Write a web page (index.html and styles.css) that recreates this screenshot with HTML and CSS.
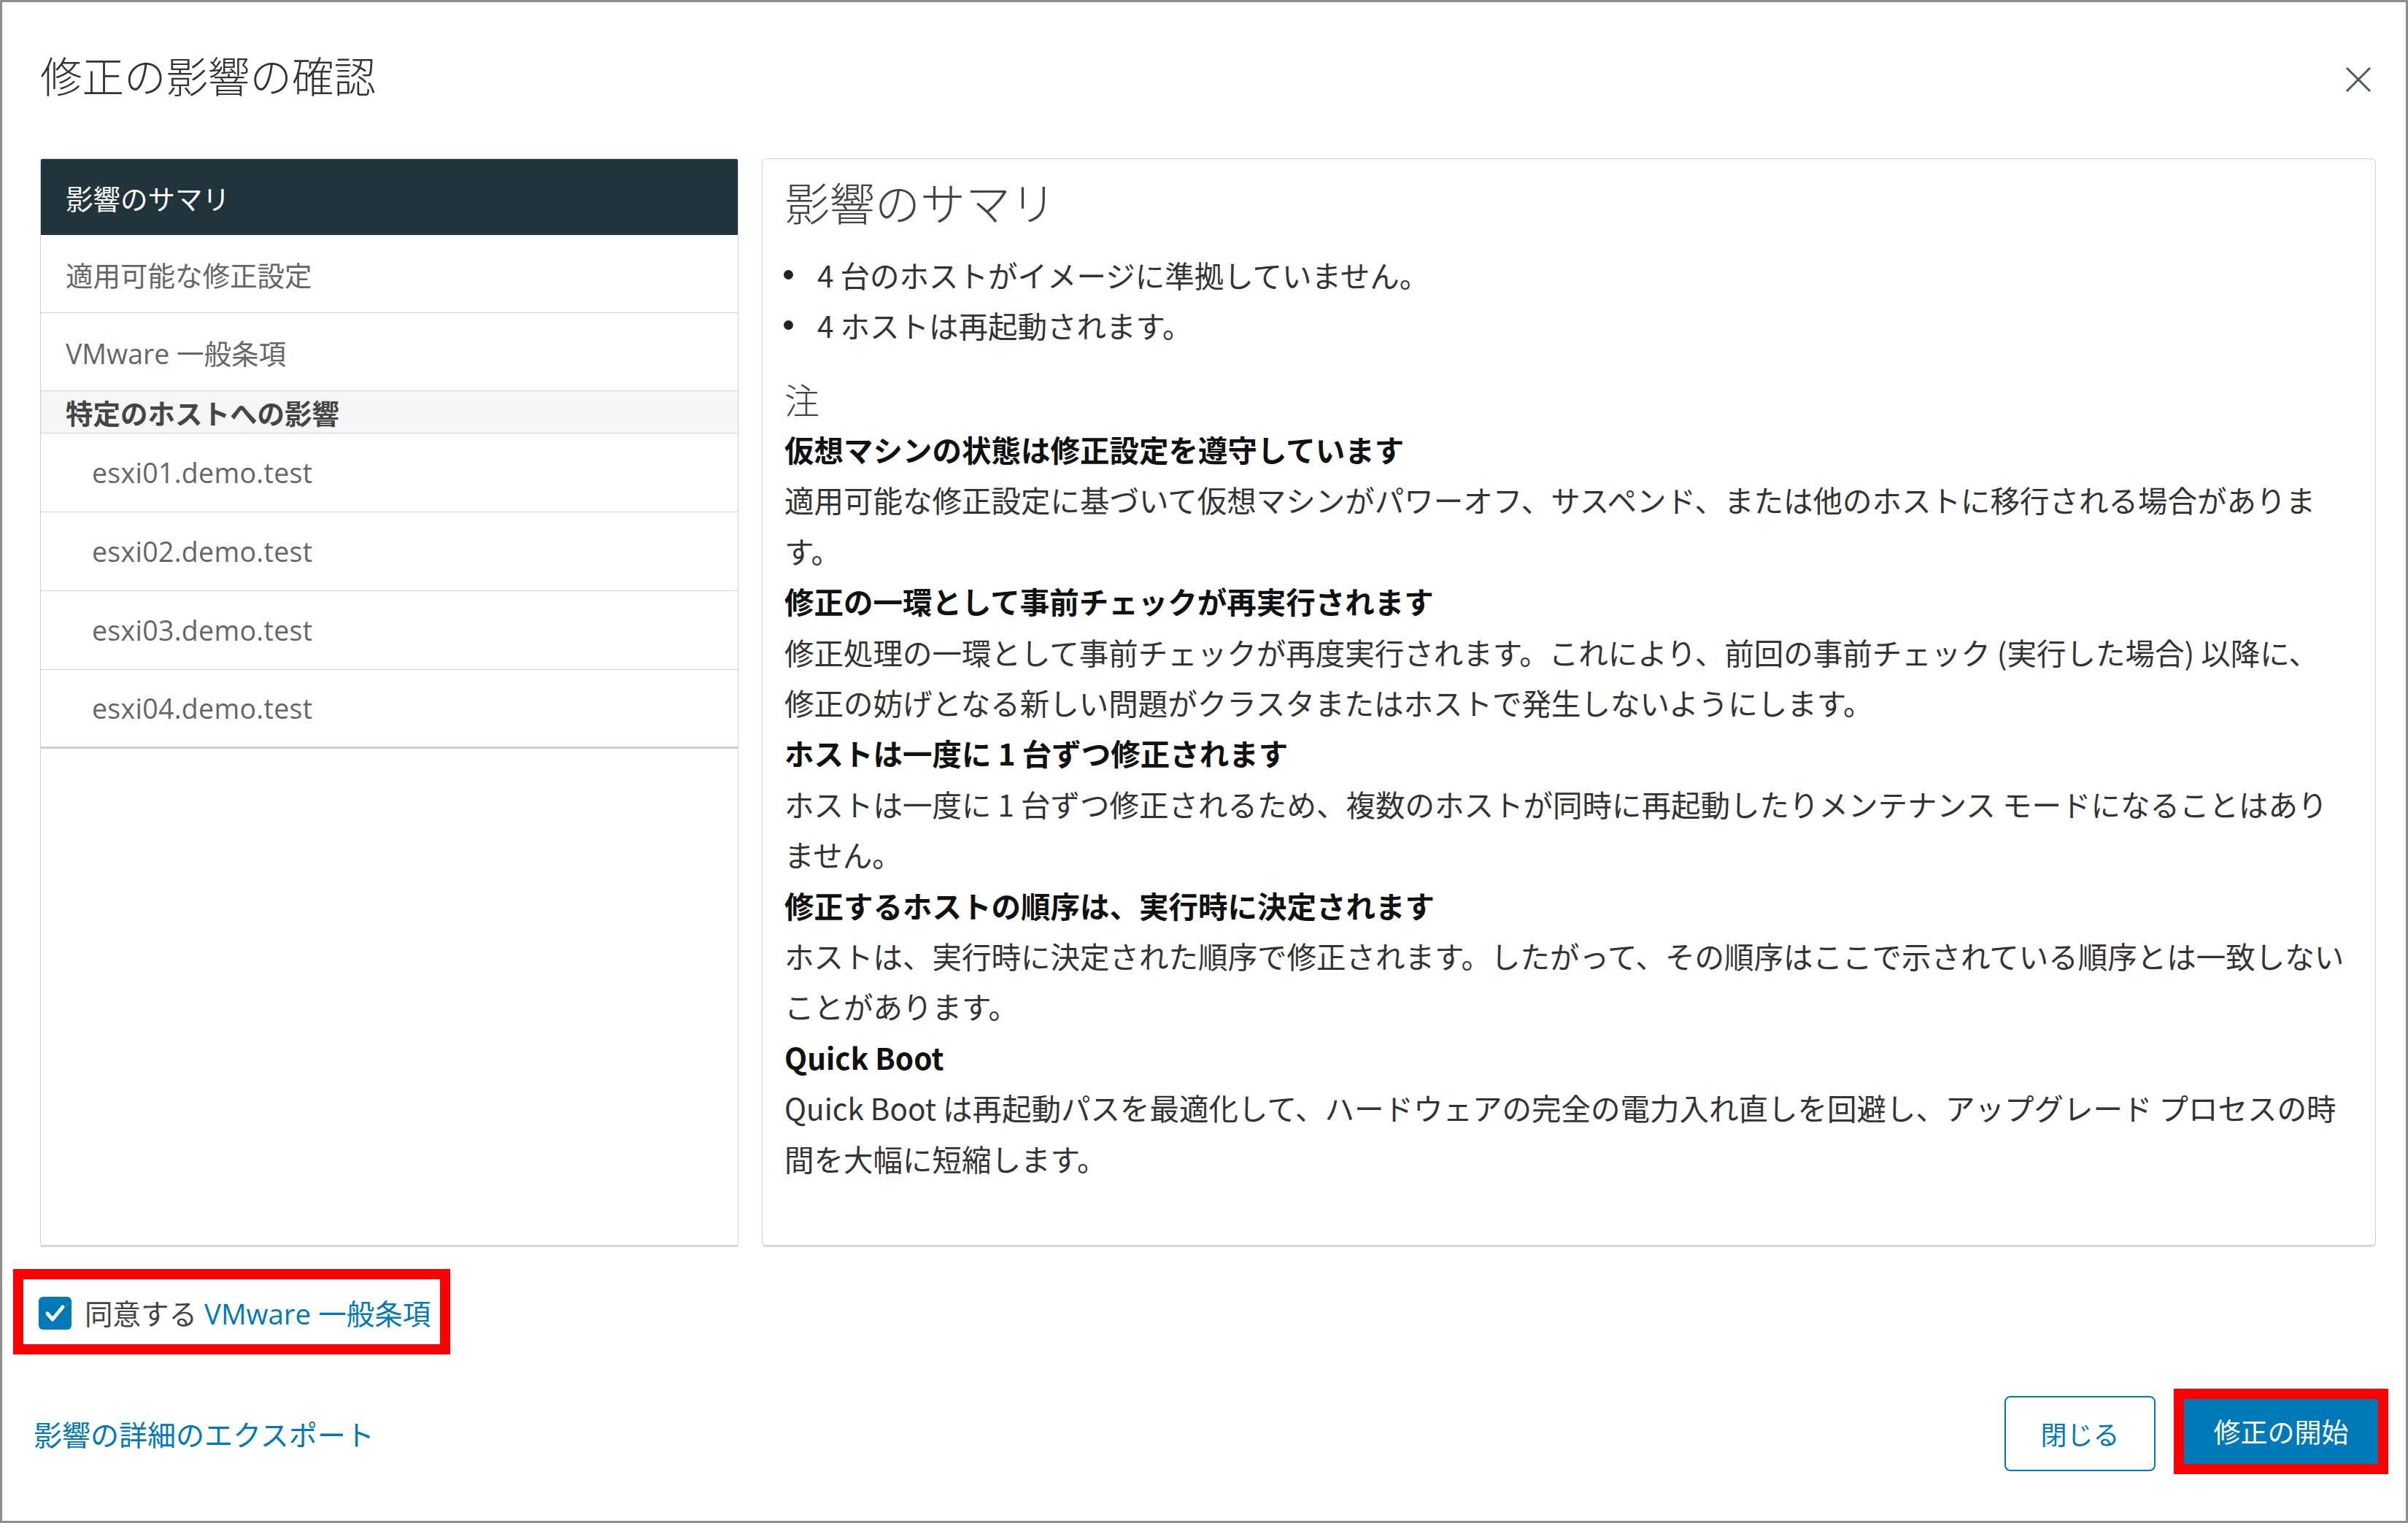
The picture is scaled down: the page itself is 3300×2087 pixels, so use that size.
FILE: index.html
```html
<!DOCTYPE html>
<html lang="ja">
<head>
  <meta charset="UTF-8" />
  <title>修正の影響の確認</title>
  <link rel="stylesheet" href="styles.css">
</head>
<body>

  <div class="modal">

    <div class="modal-header">
      <h1 class="title">修正の影響の確認</h1>
      <button class="close" aria-label="閉じる">
        <svg width="36" height="36" viewBox="0 0 36 36">
          <path d="M2 2 L34 34 M34 2 L2 34" stroke="#4d5961" stroke-width="3" fill="none" />
        </svg>
      </button>
    </div>

    <div class="modal-body">
      <div class="nav">
        <div class="nav-head">影響のサマリ</div>
        <div class="nav-item">適用可能な修正設定</div>
        <div class="nav-item">VMware 一般条項</div>
        <div class="nav-group">特定のホストへの影響</div>
        <div class="hosts">
          <div class="nav-item host">esxi01.demo.test</div>
          <div class="nav-item host">esxi02.demo.test</div>
          <div class="nav-item host">esxi03.demo.test</div>
          <div class="nav-item host">esxi04.demo.test</div>
        </div>
      </div>

      <div class="content">
        <h2>影響のサマリ</h2>
        <ul class="summary">
          <li>4 台のホストがイメージに準拠していません。</li>
          <li>4 ホストは再起動されます。</li>
        </ul>

        <h3>注</h3>

        <h4>仮想マシンの状態は修正設定を遵守しています</h4>
        <p>適用可能な修正設定に基づいて仮想マシンがパワーオフ、サスペンド、または他のホストに移行される場合がありま<br>す。</p>

        <h4>修正の一環として事前チェックが再実行されます</h4>
        <p>修正処理の一環として事前チェックが再度実行されます。これにより、前回の事前チェック (実行した場合) 以降に、<br>修正の妨げとなる新しい問題がクラスタまたはホストで発生しないようにします。</p>

        <h4>ホストは一度に 1 台ずつ修正されます</h4>
        <p>ホストは一度に 1 台ずつ修正されるため、複数のホストが同時に再起動したりメンテナンス モードになることはあり<br>ません。</p>

        <h4>修正するホストの順序は、実行時に決定されます</h4>
        <p>ホストは、実行時に決定された順序で修正されます。したがって、その順序はここで示されている順序とは一致しない<br>ことがあります。</p>

        <h4>Quick Boot</h4>
        <p>Quick Boot は再起動パスを最適化して、ハードウェアの完全の電力入れ直しを回避し、アップグレード プロセスの時<br>間を大幅に短縮します。</p>
      </div>
    </div>

    <div class="agree mark">
      <span class="checkbox">
        <svg width="45" height="45" viewBox="0 0 45 45">
          <path d="M12 23 L19 31 L33 14" stroke="#fff" stroke-width="5" fill="none" stroke-linecap="round" stroke-linejoin="round" />
        </svg>
      </span>
      <span>同意する <a class="link" href="#">VMware 一般条項</a></span>
    </div>

    <div class="footer">
      <a class="link export" href="#">影響の詳細のエクスポート</a>
      <div class="actions">
        <button class="btn btn-outline">閉じる</button>
        <div class="mark">
          <button class="btn btn-primary">修正の開始</button>
        </div>
      </div>
    </div>

  </div>

</body>
</html>
```

FILE: styles.css
```css
html, body {
  margin: 0;
}
body {
  width: 3300px;
  height: 2087px;
  background: #fff;
  color: #333;
  font-family: "Noto Sans CJK JP", sans-serif;
}
.modal {
  box-sizing: border-box;
  width: 3300px;
  height: 2087px;
  border: 3px solid #8e8e8e;
  padding: 65px 41px 0 52px;
  display: flex;
  flex-direction: column;
}

/* header */
.modal-header {
  display: flex;
  justify-content: space-between;
  align-items: flex-start;
  height: 149px;
  flex: none;
}
.title {
  margin: 0;
  font-size: 57.5px;
  font-weight: 300;
  line-height: 68px;
  color: #333;
}
.close {
  margin: 23px 6px 0 0;
  padding: 0;
  border: 0;
  background: none;
  width: 36px;
  height: 36px;
  cursor: pointer;
}
.close svg {
  display: block;
}

/* body */
.modal-body {
  display: flex;
  gap: 32px;
  height: 1490px;
  flex: none;
}
.nav {
  box-sizing: border-box;
  width: 957px;
  border: 1px solid #cfcfcf;
  border-radius: 3px;
  box-shadow: 0 2px 0 #dcdcdc;
  font-family: "Open Sans", "Noto Sans CJK JP", sans-serif;
  font-size: 37.5px;
}
.nav-head {
  height: 104px;
  background: #21333b;
  color: #fff;
  border-radius: 2px 2px 0 0;
  padding-left: 34px;
  display: flex;
  align-items: center;
}
.nav-item {
  height: 106px;
  border-bottom: 1px solid #d5d5d5;
  padding-left: 34px;
  display: flex;
  align-items: center;
  color: #666;
}
.nav-group {
  height: 57px;
  border-bottom: 1px solid #d5d5d5;
  background: #f6f6f6;
  padding-left: 34px;
  display: flex;
  align-items: center;
  font-weight: bold;
  color: #454545;
}
.nav-item.host {
  height: 107px;
  padding-left: 70px;
  letter-spacing: 0.3px;
}
.nav-item.host:last-child {
  height: 105px;
  border-bottom: 3px solid #cfcfcf;
}

.content {
  flex: 1;
  box-sizing: border-box;
  border: 1px solid #cfcfcf;
  border-radius: 6px;
  box-shadow: 0 2px 0 #dcdcdc;
  padding: 20px 20px 0 30px;
  font-size: 40.5px;
  color: #333;
}
.content h2 {
  margin: 0;
  font-size: 62px;
  font-weight: 300;
  line-height: 76px;
  color: #444;
}
.summary {
  margin: 28px 0 0;
  padding: 0;
  list-style: none;
}
.summary li {
  display: flex;
  align-items: center;
  line-height: 69px;
}
.summary li::before {
  content: "";
  flex: none;
  width: 13px;
  height: 13px;
  border-radius: 50%;
  background: #222;
  margin-left: -1px;
  margin-right: 33px;
}
.content h3 {
  margin: 32px 0 0;
  font-size: 48px;
  font-weight: 300;
  line-height: 69px;
  color: #444;
}
.content h4 {
  margin: 0;
  font-size: 40.5px;
  font-weight: bold;
  line-height: 69.4px;
  color: #111;
}
.content p {
  margin: 0;
  line-height: 69.4px;
}

/* footer */
.mark {
  border: 14px solid #f00;
}
.agree {
  align-self: flex-start;
  margin: 32px 0 0 -37px;
  height: 89px;
  padding: 0 13px 0 21px;
  display: flex;
  align-items: center;
  gap: 18px;
  font-family: "Open Sans", "Noto Sans CJK JP", sans-serif;
  font-size: 38.5px;
  color: #444;
}
.checkbox {
  width: 45px;
  height: 45px;
  border-radius: 6px;
  background: #0079b8;
  display: flex;
  margin-top: 4px;
}
.link {
  color: #0079b8;
  text-decoration: none;
}
.footer {
  display: flex;
  align-items: center;
  margin-top: 47px;
  height: 116px;
}
.export {
  margin-left: -9px;
  margin-top: 6px;
  font-size: 39px;
}
.actions {
  margin-left: auto;
  margin-right: -17px;
  display: flex;
  align-items: center;
  gap: 25px;
}
.btn {
  font-family: "Noto Sans CJK JP", sans-serif;
  cursor: pointer;
}
.btn-outline {
  box-sizing: border-box;
  width: 207px;
  height: 103px;
  margin-top: 6px;
  border: 2px solid #0079b8;
  border-radius: 8px;
  background: #fff;
  color: #0079b8;
  font-size: 36px;
}
.btn-primary {
  display: block;
  width: 266px;
  height: 89px;
  border: 0;
  background: #0079b8;
  color: #fff;
  font-size: 37px;
}
```
